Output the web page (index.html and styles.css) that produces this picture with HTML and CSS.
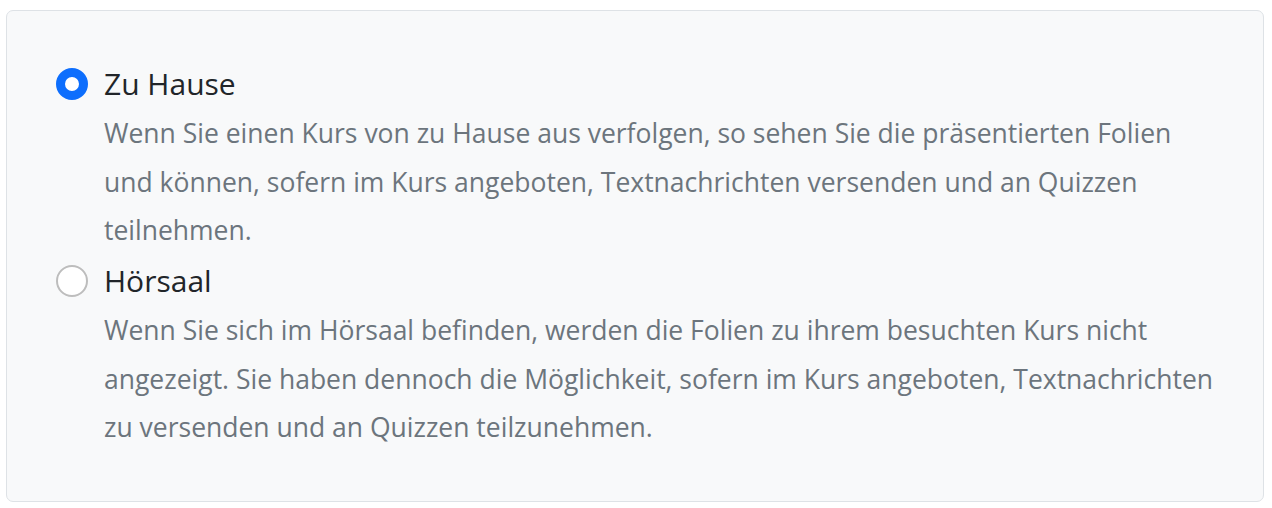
FILE: index.html
```html
<!DOCTYPE html>
<html lang="de">
<head>
<meta charset="utf-8">
<title>Teilnahme</title>
<link rel="stylesheet" href="styles.css">
</head>
<body>
<div class="card">
  <div class="option">
    <span class="radio checked"></span>
    <div class="text">
      <div class="label">Zu Hause</div>
      <p class="desc">Wenn Sie einen Kurs von zu Hause aus verfolgen, so sehen Sie die präsentierten Folien und können, sofern im Kurs angeboten, Textnachrichten versenden und an Quizzen teilnehmen.</p>
    </div>
  </div>
  <div class="option">
    <span class="radio"></span>
    <div class="text">
      <div class="label">Hörsaal</div>
      <p class="desc">Wenn Sie sich im Hörsaal befinden, werden die Folien zu ihrem besuchten Kurs nicht angezeigt. Sie haben dennoch die Möglichkeit, sofern im Kurs angeboten, Textnachrichten zu versenden und an Quizzen teilzunehmen.</p>
    </div>
  </div>
</div>
</body>
</html>
```
FILE: styles.css
```css
html, body {
  margin: 0;
  padding: 0;
  background: #ffffff;
}
body {
  padding: 10px 8px 7px 6px;
  font-family: "Open Sans", "Noto Sans", sans-serif;
}
.card {
  display: flex;
  flex-direction: column;
  gap: 1.5px;
  background: #f8f9fa;
  border: 1px solid #dee2e6;
  border-radius: 7px;
  padding: 48px 44px 49px 49px;
}
.option {
  display: flex;
  gap: 16px;
  align-items: flex-start;
}
.radio {
  flex: none;
  width: 32px;
  height: 32px;
  box-sizing: border-box;
  border-radius: 50%;
  border: 2px solid #bdbdbd;
  background: #ffffff;
  margin-top: 9px;
}
.radio.checked {
  border: 9px solid #0d6efd;
  background: #ffffff;
}
.text {
  flex: 1;
}
.label {
  font-size: 30px;
  line-height: 50px;
  color: #212529;
}
.desc {
  margin: 0;
  font-size: 26.5px;
  line-height: 48.5px;
  color: #6c757d;
}
```
